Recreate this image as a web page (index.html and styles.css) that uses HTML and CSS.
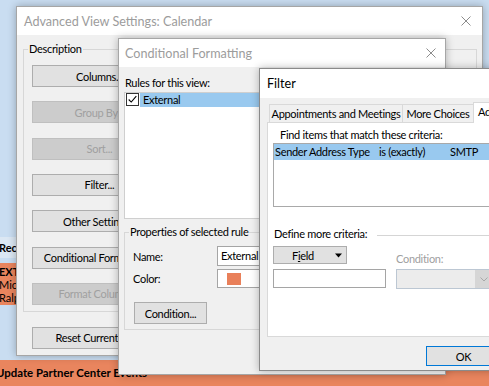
FILE: index.html
```html
<!DOCTYPE html>
<html lang="en">
<head>
    <meta charset="UTF-8">
    <meta name="viewport" content="width=device-width, initial-scale=1.0">
    <title>Advanced View Settings: Calendar</title>
    <link rel="stylesheet" href="styles.css">
</head>
<body>
    <div class="desktop">
        <!-- calendar items behind the dialogs -->
        <div class="cal-item cal-recy">Recycle</div>
        <div class="cal-item cal-ext">
            <b>EXTERNAL</b>
            <span>Microsoft</span>
            <span>Ralph</span>
        </div>
        <div class="cal-item cal-bottom">Update Partner Center Events</div>

        <div class="window advanced">
            <div class="titlebar">
                <span class="title">Advanced View Settings: Calendar</span>
                <svg class="close" viewBox="0 0 10 10"><path d="M0.5 0.5 L9.5 9.5 M9.5 0.5 L0.5 9.5" stroke="#8c8c8c" stroke-width="1" fill="none"/></svg>
            </div>
            <div class="adv-body">
                <fieldset class="group desc-group">
                    <legend>Description</legend>
                    <div class="btn-col">
                        <button class="btn btn-wide">Columns...</button>
                        <button class="btn btn-wide" disabled>Group By...</button>
                        <button class="btn btn-wide" disabled>Sort...</button>
                        <button class="btn btn-wide">Filter...</button>
                        <button class="btn btn-wide">Other Settings...</button>
                        <button class="btn btn-wide">Conditional Formatting...</button>
                        <button class="btn btn-wide" disabled>Format Columns...</button>
                    </div>
                </fieldset>
                <button class="btn btn-wide reset-btn">Reset Current View</button>
            </div>
        </div>

        <div class="window cond">
            <div class="titlebar">
                <span class="title">Conditional Formatting</span>
                <svg class="close" viewBox="0 0 10 10"><path d="M0.5 0.5 L9.5 9.5 M9.5 0.5 L0.5 9.5" stroke="#8c8c8c" stroke-width="1" fill="none"/></svg>
            </div>
            <div class="cond-body">
                <div class="rules-label">Rules for this view:</div>
                <div class="rules-list">
                    <div class="rule-row">
                        <span class="checkbox">
                            <svg viewBox="0 0 13 13"><polyline points="2,6.5 5,9.5 11,2.5" stroke="#000" stroke-width="1.3" fill="none"/></svg>
                        </span>
                        <span class="rule-name">External</span>
                    </div>
                </div>
                <fieldset class="group props-group">
                    <legend>Properties of selected rule</legend>
                    <div class="prop-row">
                        <span class="prop-label">Name:</span>
                        <div class="name-box">External</div>
                    </div>
                    <div class="prop-row color-row">
                        <span class="prop-label">Color:</span>
                        <div class="color-box"><span class="swatch"></span></div>
                    </div>
                    <button class="btn cond-btn">Condition...</button>
                </fieldset>
            </div>
        </div>

        <div class="window filter">
            <div class="titlebar">
                <span class="title">Filter</span>
            </div>
            <div class="filter-body">
                <div class="tabs">
                    <div class="tab tab-appt">Appointments and Meetings</div>
                    <div class="tab tab-more">More Choices</div>
                    <div class="tab tab-active">Advanced</div>
                </div>
                <div class="tab-panel">
                    <div class="find-label">Find items that match these criteria:</div>
                    <div class="criteria-list">
                        <div class="criteria-row">
                            <span class="col-field">Sender Address Type</span>
                            <span class="col-cond">is (exactly)</span>
                            <span>SMTP</span>
                        </div>
                    </div>
                    <div class="define-row">
                        <span>Define more criteria:</span>
                        <span class="define-line"></span>
                    </div>
                    <div class="criteria-form">
                        <button class="btn field-btn">
                            <span>F<u>i</u>eld</span>
                            <svg class="tri" viewBox="0 0 9 5"><polygon points="0,0 9,0 4.5,5" fill="#000"/></svg>
                        </button>
                        <span class="cond-label">Condition:</span>
                        <div class="field-input"></div>
                        <div class="combo">
                            <span class="combo-arrow">
                                <svg viewBox="0 0 8 5"><polyline points="0.5,0.5 4,4 7.5,0.5" stroke="#a8a8a8" stroke-width="1" fill="none"/></svg>
                            </span>
                        </div>
                    </div>
                </div>
                <div class="filter-footer">
                    <button class="btn ok-btn">OK</button>
                </div>
            </div>
        </div>
    </div>
</body>
</html>
```

FILE: styles.css
```css
* {
    box-sizing: border-box;
}

body {
    margin: 0;
    font-family: Lato, "Liberation Sans", sans-serif;
    font-size: 11px;
    letter-spacing: -0.3px;
    color: #000;
}

.desktop {
    position: relative;
    width: 489px;
    height: 386px;
    overflow: hidden;
    background: #c9ddf1;
}

/* calendar behind */
.cal-item {
    position: absolute;
    z-index: 0;
    left: -1px;
    white-space: nowrap;
    overflow: hidden;
}

.cal-recy {
    top: 237px;
    width: 80px;
    height: 21px;
    line-height: 21px;
    background: #dbe7f3;
    font-weight: bold;
    letter-spacing: 0;
}

.cal-ext {
    top: 263px;
    width: 80px;
    height: 42px;
    background: #e9855e;
    display: flex;
    flex-direction: column;
    padding-top: 2px;
    line-height: 13px;
    letter-spacing: 0;
}

.cal-bottom {
    top: 360px;
    left: -4px;
    width: 500px;
    height: 26px;
    line-height: 26px;
    background: #e9855e;
    font-weight: bold;
    font-size: 11.4px;
    letter-spacing: 0;
}

/* windows */
.window {
    position: absolute;
    display: flex;
    flex-direction: column;
    background: #f0f0f0;
    border: 1px solid #a6a6a6;
    box-shadow: 0 0 8px rgba(0,0,0,0.28);
    overflow: hidden;
}

.advanced {
    z-index: 1;
    left: 16px;
    top: 6px;
    width: 467px;
    height: 350px;
}

.cond {
    z-index: 2;
    left: 118px;
    top: 38px;
    width: 328px;
    height: 337px;
}

.filter {
    z-index: 3;
    left: 259px;
    top: 68px;
    width: 250px;
    height: 303px;
    border-color: #8a8a8a;
}

.titlebar {
    flex: none;
    height: 28px;
    display: flex;
    align-items: center;
    justify-content: space-between;
    background: #fff;
    padding: 0 11px 0 7px;
}

.cond .titlebar {
    padding: 0 9px 0 6px;
}

.filter .titlebar {
    height: 29px;
}

.title {
    font-size: 12.6px;
    letter-spacing: 0;
    color: #9c9c9c;
}

.filter .title {
    color: #000;
}

.close {
    width: 10px;
    height: 10px;
}

/* shared controls */
.group {
    margin: 0;
    min-width: 0;
    border: 1px solid #d7d7d7;
    padding: 8px 8px 6px;
}

.group legend {
    padding: 0 1px;
    margin-left: -4px;
    line-height: 16px;
}

.btn {
    font: inherit;
    letter-spacing: inherit;
    color: #000;
    height: 22px;
    padding: 0 4px;
    background: #e1e1e1;
    border: 1px solid #adadad;
    white-space: nowrap;
}

.btn[disabled] {
    background: #cccccc;
    border-color: #bfbfbf;
    color: #a0a0a0;
}

.btn-wide {
    width: 135px;
}

/* advanced view settings */
.adv-body {
    padding: 6px 6px 0;
}

.desc-group {
    width: 454px;
}

.btn-col {
    display: flex;
    flex-direction: column;
    align-items: flex-start;
    gap: 14.33px;
}

.reset-btn {
    margin: 15px 0 0 9px;
}

/* conditional formatting */
.cond-body {
    padding: 8px 0 0 5px;
}

.rules-label {
    line-height: 16px;
    padding-left: 1px;
}

.rules-list {
    margin-top: 1px;
    width: 318px;
    height: 127px;
    background: #fff;
    border: 1px solid #cfcfcf;
}

.rule-row {
    display: flex;
    height: 14px;
}

.checkbox {
    width: 13px;
    height: 13px;
    margin-left: 1px;
    border: 1px solid #333;
    background: #fff;
    display: flex;
}

.checkbox svg {
    width: 11px;
    height: 11px;
}

.rule-name {
    flex: 1;
    margin-left: 1px;
    padding-left: 3px;
    line-height: 14px;
    background: #99c9ef;
}

.props-group {
    margin-top: 5px;
    width: 316px;
    padding: 6px 8px 5px;
}

.prop-row {
    display: flex;
    align-items: center;
}

.color-row {
    margin-top: 3px;
}

.prop-label {
    width: 84px;
}

.name-box {
    width: 180px;
    height: 20px;
    line-height: 18px;
    padding-left: 3px;
    background: #fff;
    border: 1px solid #a5a5a5;
}

.color-box {
    width: 60px;
    height: 19px;
    display: flex;
    align-items: center;
    padding-left: 9px;
    background: #fff;
    border: 1px solid #a5a5a5;
}

.swatch {
    width: 14px;
    height: 12px;
    background: #e9805a;
}

.cond-btn {
    display: block;
    margin: 14px 0 0 1px;
    width: 73px;
}

/* filter */
.filter-body {
    padding: 4px 0 0 8px;
}

.tabs {
    display: flex;
    align-items: flex-end;
    margin-left: 1px;
}

.tab {
    flex: none;
    height: 18px;
    line-height: 17px;
    text-align: center;
    white-space: nowrap;
    border: 1px solid #d9d9d9;
    border-bottom: none;
    background: #f0f0f0;
}

.tab-appt {
    width: 134px;
}

.tab-more {
    width: 72px;
    margin-left: -1px;
}

.tab-active {
    position: relative;
    z-index: 1;
    width: 80px;
    height: 21px;
    margin-left: -1px;
    margin-bottom: -1px;
    padding-left: 4px;
    text-align: left;
    background: #fff;
}

.tab-panel {
    width: 240px;
    height: 215px;
    margin-left: -1px;
    padding: 4px 0 0 5px;
    background: #fff;
    border: 1px solid #d9d9d9;
}

.find-label {
    margin-left: 7px;
    line-height: 16px;
}

.criteria-list {
    width: 230px;
    height: 64px;
    border: 1px solid #a9a9a9;
}

.criteria-row {
    display: flex;
    height: 16px;
    line-height: 16px;
    padding-left: 1px;
    background: #99c9ef;
    white-space: nowrap;
}

.col-field {
    width: 104px;
}

.col-cond {
    width: 71px;
}

.define-row {
    display: flex;
    align-items: center;
    margin: 19px 0 0 1px;
    line-height: 16px;
}

.define-line {
    flex: 1;
    height: 1px;
    margin: 3px 0 0 10px;
    background: #d5d5d5;
}

.criteria-form {
    display: grid;
    grid-template-columns: 113px 100px;
    grid-template-rows: 18px 20px;
    column-gap: 10px;
    row-gap: 5px;
    margin-top: 4px;
}

.field-btn {
    width: 74px;
    height: 18px;
    display: flex;
    align-items: center;
    gap: 21px;
    padding-left: 18px;
}

.tri {
    width: 9px;
    height: 5px;
}

.cond-label {
    align-self: end;
    margin-bottom: -3px;
    line-height: 16px;
    color: #a0a0a0;
}

.field-input {
    height: 19px;
    background: #fff;
    border: 1px solid #a5a5a5;
}

.combo {
    width: 97px;
    height: 20px;
    display: flex;
    justify-content: flex-end;
    background: #ececec;
    border: 1px solid #bcc7d3;
}

.combo-arrow {
    width: 17px;
    display: flex;
    align-items: center;
    justify-content: center;
    background: #d6d6d6;
}

.combo-arrow svg {
    width: 8px;
    height: 5px;
}

.filter-footer {
    padding: 9px 0 0 158px;
}

.ok-btn {
    width: 75px;
    height: 20px;
    border-color: #0078d7;
}
```
